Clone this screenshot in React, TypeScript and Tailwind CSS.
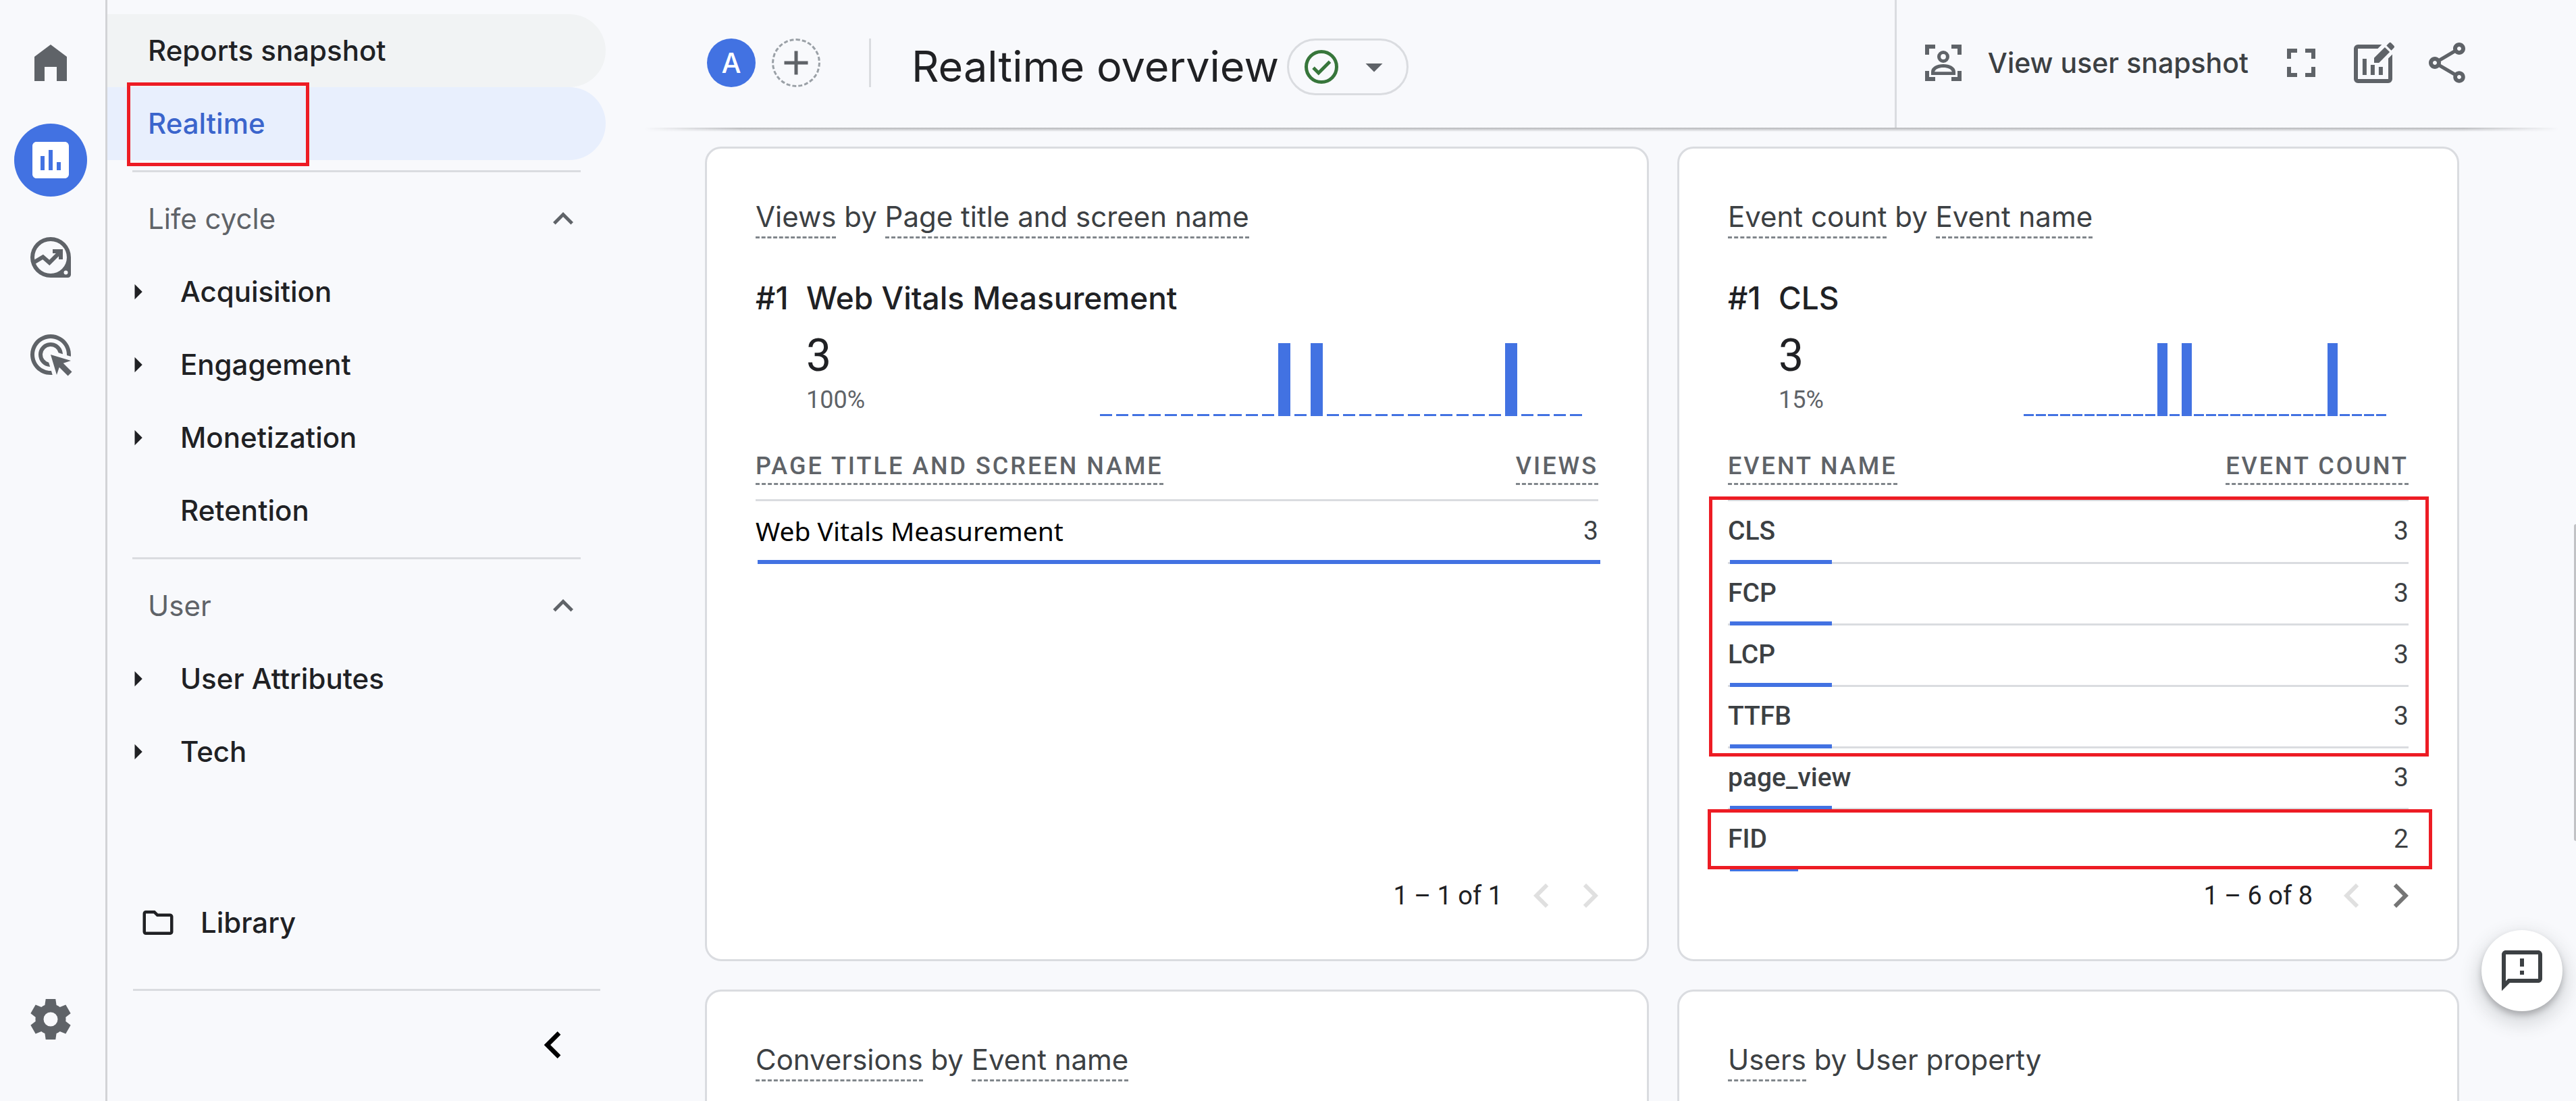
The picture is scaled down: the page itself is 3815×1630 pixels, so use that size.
import type { ReactNode } from "react";
import {
  MdAdd,
  MdAdsClick,
  MdArrowDropDown,
  MdArrowRight,
  MdAssessment,
  MdChevronLeft,
  MdChevronRight,
  MdExpandLess,
  MdFullscreen,
  MdOutlineFeedback,
  MdOutlineFolder,
  MdOutlineShare,
} from "react-icons/md";

const ICON = "size-[72px] shrink-0";
const DISPLAY = "font-['Inter','Roboto',sans-serif]";

function HomeIcon() {
  return (
    <svg viewBox="0 0 24 24" className={ICON} fill="currentColor" aria-hidden="true">
      <path d="M4 21V9l8-6 8 6v12h-5v-7H9v7z" />
    </svg>
  );
}

function ExploreIcon() {
  return (
    <svg viewBox="0 0 24 24" className={ICON} fill="currentColor" aria-hidden="true">
      <path
        fillRule="evenodd"
        d="M12 2a10 10 0 0 0 0 20h8.500a1.500 1.500 0 0 0 1.500-1.500V12A10 10 0 0 0 12 2zm0 2a8 8 0 1 1 0 16 8 8 0 0 1 0-16zm7.500 14.500a1 1 0 1 1 0 2 1 1 0 0 1 0-2z"
      />
      <path d="M3.500 14.600 8.200 11.800l3.200 2.800L16.400 9.600" fill="none" stroke="currentColor" strokeWidth="2" />
      <path d="M13 8h5v5h-2v-3h-3z" />
    </svg>
  );
}

function SettingsIcon() {
  return (
    <svg viewBox="0 0 24 24" className={ICON} fill="currentColor" aria-hidden="true">
      <path
        fillRule="evenodd"
        d="M19.500 12c0-.34-.03-.66-.07-.98l2.450-1.930-2.440-4.220-2.870 1.170c-.52-.4-1.090-.74-1.710-1L14.430 2H9.570l-.43 3.040c-.62.26-1.190.6-1.710 1L4.560 4.870 2.120 9.090l2.450 1.930c-.04.32-.07.64-.07.98s.03.66.07.98l-2.450 1.930 2.440 4.220 2.870-1.170c.52.4 1.090.74 1.710 1L9.570 22h4.860l.43-3.040c.62-.26 1.190-.6 1.710-1l2.870 1.170 2.440-4.220-2.450-1.930c.04-.32.07-.64.07-.98zM12 15.500a3.500 3.500 0 1 1 0-7 3.500 3.500 0 0 1 0 7z"
      />
    </svg>
  );
}

function UserSnapshotIcon() {
  return (
    <svg viewBox="0 0 24 24" className={ICON} fill="currentColor" aria-hidden="true">
      <path d="M3 3h5v2H5v3H3zM16 3h5v5h-2V5h-3zM3 16h2v3h3v2H3zM19 16h2v5h-5v-2h3z" />
      <path
        fillRule="evenodd"
        d="M12 6a3 3 0 1 1 0 6 3 3 0 0 1 0-6zm0 1.700a1.300 1.300 0 1 0 0 2.600 1.300 1.300 0 0 0 0-2.600z"
      />
      <path
        fillRule="evenodd"
        d="M12 12.700c3.300 0 6 1.400 6 3.800V18H6v-1.500c0-2.400 2.700-3.800 6-3.800zm0 1.600c-2.300 0-4 .8-4.300 2.100h8.600c-.3-1.300-2-2.100-4.300-2.100z"
      />
    </svg>
  );
}

function EditReportIcon() {
  return (
    <svg viewBox="0 0 24 24" className={ICON} fill="currentColor" aria-hidden="true">
      <path d="M15.800 3H4a2 2 0 0 0-2 2v15a2 2 0 0 0 2 2h15a2 2 0 0 0 2-2V7.800l-2 2V20H4V5h9.800z" />
      <path d="M6.300 10h2v8h-2zM10.300 13h2v5h-2zM14.300 14h2v4h-2z" />
      <path d="M12 9.600V12h2.400l5.300-5.300-2.400-2.400zM18.100 3.500l2.400 2.400 1.300-1.300a.7.7 0 0 0 0-1l-1.400-1.400a.7.7 0 0 0-1 0z" />
    </svg>
  );
}

function CheckIcon() {
  return (
    <svg viewBox="0 0 24 24" className="size-[60px] text-[#37763b]" aria-hidden="true">
      <circle cx="12" cy="12" r="9" fill="none" stroke="currentColor" strokeWidth="2" />
      <path d="m7.200 12.500 3.100 3.100 6.700-6.700" fill="none" stroke="currentColor" strokeWidth="2" />
    </svg>
  );
}

function RailButton({ label, active, children }: { label: string; active?: boolean; children: ReactNode }) {
  return (
    <button
      aria-label={label}
      className={`flex size-[108px] items-center justify-center rounded-full ${
        active ? "bg-[#4272e2] text-white" : "text-[#5f6368]"
      }`}
    >
      {children}
    </button>
  );
}

function Rail() {
  return (
    <nav
      aria-label="Products"
      className="flex w-[159px] shrink-0 flex-col items-center gap-9 border-r-[3px] border-[#d2d3d6] pt-[39px] pr-1.5 pb-[67px]"
    >
      <RailButton label="Home">
        <HomeIcon />
      </RailButton>
      <RailButton label="Reports" active>
        <MdAssessment className={ICON} />
      </RailButton>
      <RailButton label="Explore">
        <ExploreIcon />
      </RailButton>
      <RailButton label="Advertising">
        <MdAdsClick className={ICON} />
      </RailButton>
      <div className="mt-auto">
        <RailButton label="Admin">
          <SettingsIcon />
        </RailButton>
      </div>
    </nav>
  );
}

function Divider() {
  return <hr className="my-[15px] mr-[37px] ml-[37px] border-t-[3px] border-[#dadce0]" />;
}

function Section({ title, items }: { title: string; items: { label: string; leaf?: boolean }[] }) {
  return (
    <section>
      <button className="flex h-[108px] w-full items-center justify-between pr-[33px] pl-[60px] text-[#5f6368]">
        {title}
        <MdExpandLess className="size-[60px]" />
      </button>
      <ul>
        {items.map((item) => (
          <li key={item.label}>
            <a href="#" className="flex h-[108px] items-center pl-[18px] font-medium">
              <span className="w-[90px]">{!item.leaf && <MdArrowRight className="size-[54px]" />}</span>
              {item.label}
            </a>
          </li>
        ))}
      </ul>
    </section>
  );
}

function Sidebar() {
  return (
    <nav
      aria-label="Reports"
      className={`flex w-[780px] shrink-0 flex-col pt-[21px] pr-[42px] text-[42px] leading-[60px] text-[#202124] ${DISPLAY}`}
    >
      <a
        href="#"
        className="flex h-[108px] items-center rounded-l-md rounded-r-full bg-[#f1f3f4] pl-[60px] font-medium"
      >
        Reports snapshot
      </a>
      <a
        href="#"
        aria-current="page"
        className="relative flex h-[108px] items-center rounded-l-md rounded-r-full bg-[#e8effd] pl-[60px] font-medium text-[#3b65cc]"
      >
        Realtime
        <span className="pointer-events-none absolute -top-[7px] left-[29px] h-[124px] w-[270px] border-5 border-[#ed1c24]" />
      </a>
      <Divider />
      <Section
        title="Life cycle"
        items={[
          { label: "Acquisition" },
          { label: "Engagement" },
          { label: "Monetization" },
          { label: "Retention", leaf: true },
        ]}
      />
      <Divider />
      <Section title="User" items={[{ label: "User Attributes" }, { label: "Tech" }]} />
      <div className="mt-auto mr-2 ml-[38px]">
        <a href="#" className="mb-[44px] flex h-[108px] items-center gap-[36px] pl-[10px] font-medium">
          <MdOutlineFolder className="size-[54px]" />
          Library
        </a>
        <div className="flex h-[166px] items-center justify-end border-t-[3px] border-[#dadce0] pr-[30px] pb-1">
          <button aria-label="Collapse navigation">
            <MdChevronLeft className="size-[80px] text-black" />
          </button>
        </div>
      </div>
    </nav>
  );
}

function Header() {
  return (
    <header className={DISPLAY}>
      <div className="flex h-[189px] pl-[108px]">
        <div className="flex flex-1 items-start pt-[57px]">
          <button className="size-[72px] rounded-full bg-[#4272e2] text-[41px] leading-[72px] font-medium text-white">
            A
          </button>
          <button
            aria-label="Add comparison"
            className="ml-6 flex size-[72px] items-center justify-center rounded-full border-3 border-dashed border-[#9aa0a6] text-[#5f6368]"
          >
            <MdAdd className="size-[60px]" />
          </button>
          <div className="ml-[72px] h-[72px] w-[3px] bg-[#dadce0]" />
          <h1 className="ml-[60px] text-[63px] leading-[82px] text-[#202124]">Realtime overview</h1>
          <button
            aria-label="Data quality"
            className="ml-3 flex h-[84px] items-center gap-[18px] rounded-full border-3 border-[#dadce0] px-[18px] text-[#5f6368]"
          >
            <CheckIcon />
            <MdArrowDropDown className="size-[60px]" />
          </button>
        </div>
        <div className="flex items-start border-l-3 border-[#dadce0] pt-[57px] pr-[155px] pl-[33px] text-[#5f6368]">
          <button className="flex items-center gap-[30px] text-[41px] leading-[72px] font-medium text-[#3c4043]">
            <span className="text-[#5f6368]">
              <UserSnapshotIcon />
            </span>
            View user snapshot
          </button>
          <button aria-label="Full screen" className="ml-[42px]">
            <MdFullscreen className={ICON} />
          </button>
          <button aria-label="Customize report" className="ml-9">
            <EditReportIcon />
          </button>
          <button aria-label="Share" className="ml-9">
            <MdOutlineShare className={ICON} />
          </button>
        </div>
      </div>
      <div className="mr-[25px] ml-[15px] h-1.5 bg-linear-to-b from-[#b4b5b8] to-[#f8f9fc] [mask-image:linear-gradient(to_right,transparent,black_5%,black_95%,transparent)]" />
    </header>
  );
}

function Term({ children }: { children: ReactNode }) {
  return <span className="border-b-3 border-dashed border-[#80868b] pb-1">{children}</span>;
}

const ACTIVE_MINUTES = [11, 13, 25];

function MinuteBars({ wide }: { wide?: boolean }) {
  return (
    <div
      role="img"
      aria-label="Activity per minute"
      className={`flex h-[108px] items-end ${wide ? "mr-6 gap-1.5" : "mr-[33px] gap-[3px]"}`}
    >
      {Array.from({ length: 30 }, (_, minute) => (
        <div
          key={minute}
          className={`bg-[#4272e2] ${wide ? "w-[18px]" : "w-[15px]"} ${
            ACTIVE_MINUTES.includes(minute) ? "h-full" : "h-[3px]"
          }`}
        />
      ))}
    </div>
  );
}

type Row = { name: string; value: number; share: number };

type CardData = {
  title: ReactNode;
  top: string;
  percent: string;
  nameHeader: string;
  valueHeader: string;
  rows: Row[];
  range: string;
  hasNext?: boolean;
  wide?: boolean;
  nameClass: string;
  children?: ReactNode;
};

function CardTitle({ children }: { children: ReactNode }) {
  return <h2 className={`text-[42px] leading-[60px] text-[#3c4043] ${DISPLAY}`}>{children}</h2>;
}

const CARD = "flex flex-col rounded-3xl border-3 border-[#dadce0] bg-white px-18 pt-[71px]";

function MetricCard(props: CardData) {
  const { title, top, percent, nameHeader, valueHeader, rows, range, hasNext, wide, nameClass, children } = props;
  return (
    <article className={`${CARD} pb-[58px]`}>
      <CardTitle>{title}</CardTitle>
      <div className={`mt-[60px] flex text-[46px] leading-[60px] font-medium text-[#202124] ${DISPLAY}`}>
        <span className="w-[75px]">#1</span>
        <span>{top}</span>
      </div>
      <div className="mt-5 flex items-end justify-between pl-[75px]">
        <div className="pb-[3px]">
          <div className="text-[66px] leading-[72px] text-[#202124]">3</div>
          <div className="mt-2 text-[36px] leading-[42px] text-[#5f6368]">{percent}</div>
        </div>
        <MinuteBars wide={wide} />
      </div>
      <div className="relative">
        <table className="w-full border-separate border-spacing-0">
          <thead>
            <tr className="text-[36px] leading-[42px] font-medium tracking-[3px] text-[#5f6368]">
              <th scope="col" className="border-b-3 border-[#dadce0] pt-[53px] pb-[28px] text-left font-medium">
                <Term>{nameHeader}</Term>
              </th>
              <th scope="col" className="border-b-3 border-[#dadce0] pt-[53px] pb-[28px] text-right font-medium">
                <Term>{valueHeader}</Term>
              </th>
            </tr>
          </thead>
          <tbody>
            {rows.map((row, i) => {
              const line = i === rows.length - 1 ? "border-transparent" : "border-[#dadce0]";
              return (
                <tr
                  key={row.name}
                  className="relative h-[91px] text-[39px] leading-[48px] text-[#3c4043] first:h-[93px]"
                >
                  <td className={`border-b-3 pb-[3px] ${line} ${nameClass}`}>
                    {row.name}
                    <span
                      className="absolute bottom-0 left-[3px] h-1.5 bg-[#4272e2]"
                      style={{ width: `${row.share}%` }}
                    />
                  </td>
                  <td className={`border-b-3 pb-[3px] text-right ${line}`}>{row.value}</td>
                </tr>
              );
            })}
          </tbody>
        </table>
        {children}
      </div>
      <div className="mt-auto -mr-6 flex items-center justify-end text-[38px] leading-[72px] text-[#202124]">
        <span className="mr-[22px]">{range}</span>
        <button aria-label="Previous page" disabled className="text-[#e0e0e0]">
          <MdChevronLeft className={ICON} />
        </button>
        <button aria-label="Next page" disabled={!hasNext} className={hasNext ? "text-[#757575]" : "text-[#e0e0e0]"}>
          <MdChevronRight className={ICON} />
        </button>
      </div>
    </article>
  );
}

export default function App() {
  return (
    <div className="relative flex h-screen overflow-hidden bg-[#f8f9fc] font-['Roboto','Liberation_Sans',sans-serif]">
      <Rail />
      <Sidebar />
      <main className="min-w-0 flex-1">
        <Header />
        <div className="mt-[22px] mr-[173px] ml-[105px] grid grid-cols-[1398fr_1158fr] gap-[42px]">
          <MetricCard
            title={
              <>
                <Term>Views</Term> by <Term>Page title and screen name</Term>
              </>
            }
            top="Web Vitals Measurement"
            percent="100%"
            nameHeader="PAGE TITLE AND SCREEN NAME"
            valueHeader="VIEWS"
            rows={[{ name: "Web Vitals Measurement", value: 3, share: 100 }]}
            range="1 – 1 of 1"
            nameClass="font-['Noto_Sans','Open_Sans',sans-serif] text-black"
            wide
          />
          <MetricCard
            title={
              <>
                <Term>Event count</Term> by <Term>Event name</Term>
              </>
            }
            top="CLS"
            percent="15%"
            nameHeader="EVENT NAME"
            valueHeader="EVENT COUNT"
            rows={[
              { name: "CLS", value: 3, share: 15 },
              { name: "FCP", value: 3, share: 15 },
              { name: "LCP", value: 3, share: 15 },
              { name: "TTFB", value: 3, share: 15 },
              { name: "page_view", value: 3, share: 15 },
              { name: "FID", value: 2, share: 10 },
            ]}
            range="1 – 6 of 8"
            hasNext
            nameClass="font-medium"
          >
            <div className="pointer-events-none absolute -right-[30px] bottom-[170px] -left-[28px] h-[385px] border-5 border-[#ed1c24]" />
            <div className="pointer-events-none absolute -right-[35px] bottom-[3px] -left-[30px] h-[89px] border-5 border-[#ed1c24]" />
          </MetricCard>
          <article className={`${CARD} h-[400px]`}>
            <CardTitle>
              <Term>Conversions</Term> by <Term>Event name</Term>
            </CardTitle>
          </article>
          <article className={`${CARD} h-[400px]`}>
            <CardTitle>
              <Term>Users</Term> by User property
            </CardTitle>
          </article>
        </div>
      </main>
      <button
        aria-label="Send feedback"
        className="absolute right-5 bottom-[133px] flex size-[120px] items-center justify-center rounded-full bg-white text-[#3c4043] shadow-[0_6px_9px_rgba(60,64,67,0.3),0_12px_24px_9px_rgba(60,64,67,0.15)]"
      >
        <MdOutlineFeedback className={ICON} />
      </button>
      <div className="absolute top-[776px] right-0 h-[469px] w-[3px] rounded-l-sm bg-[#c1c2c5]" />
    </div>
  );
}
